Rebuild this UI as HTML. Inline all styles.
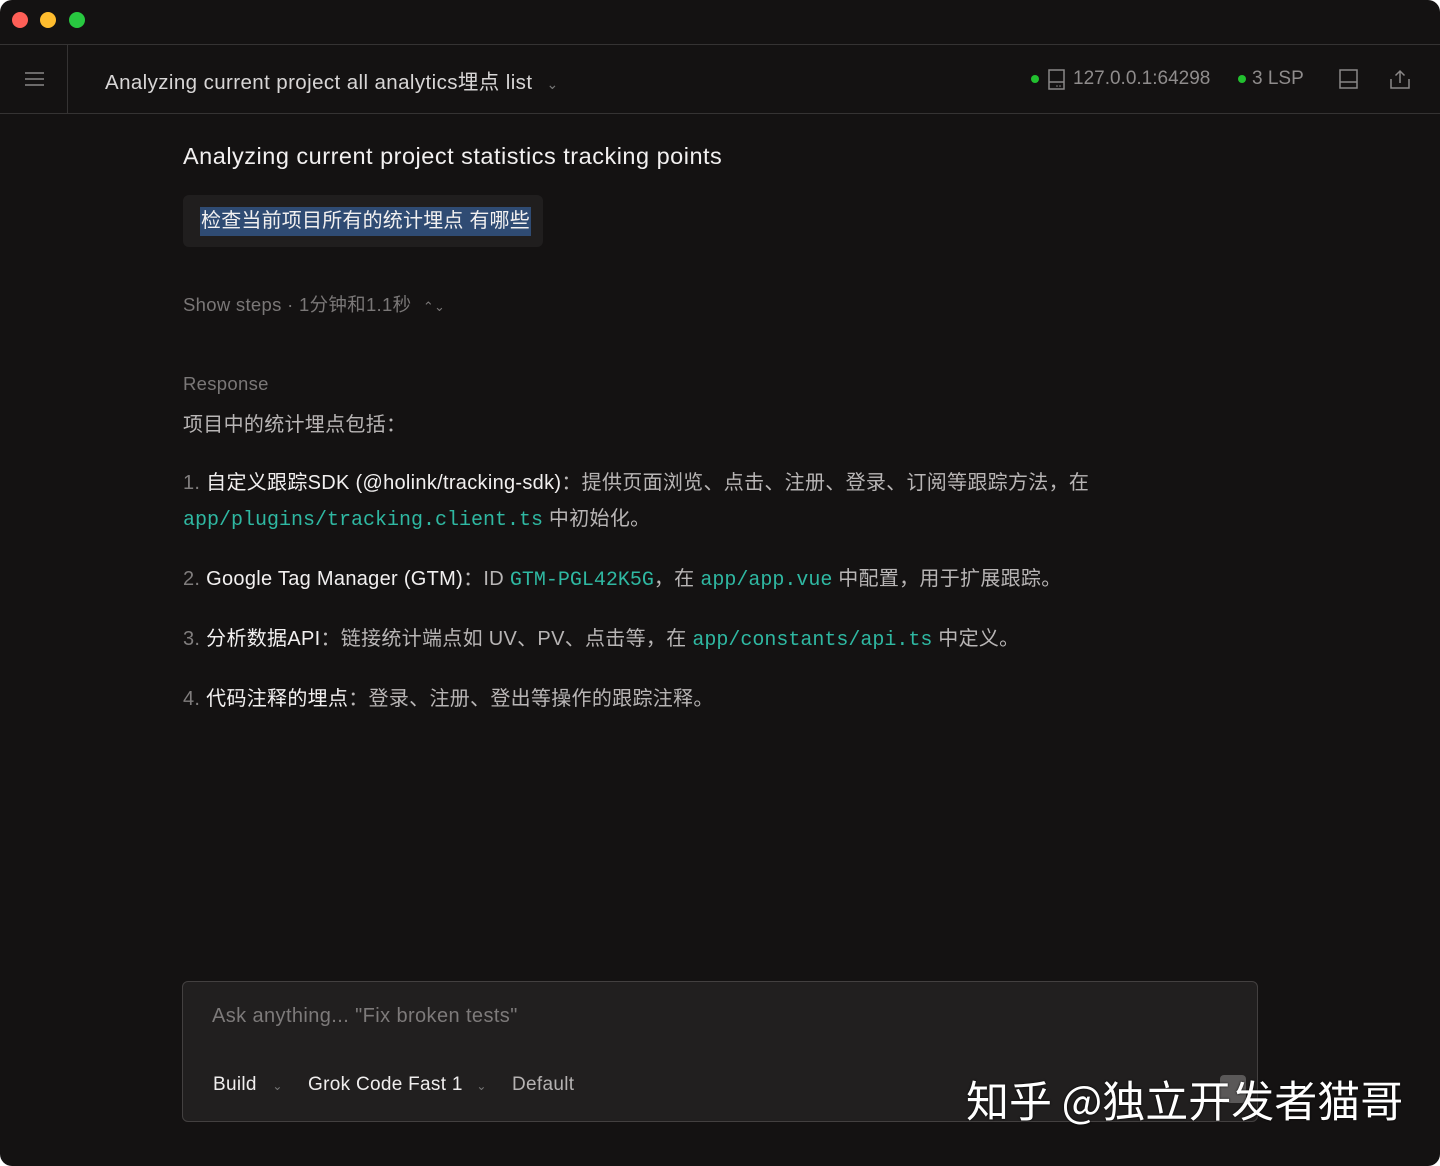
<!DOCTYPE html>
<html><head><meta charset="utf-8"><style>
*{margin:0;padding:0;box-sizing:border-box}
html,body{width:1440px;height:1166px;background:#fff;overflow:hidden}
.win{position:absolute;left:0;top:0;width:1440px;height:1166px;background:#141212;border-radius:12px;overflow:hidden;font-family:"Liberation Sans","Noto Sans CJK SC",sans-serif;color:#e6e4e4}
.tb{height:45px;border-bottom:1px solid #353333;position:relative}
.dot{position:absolute;top:12px;width:16px;height:16px;border-radius:50%}
.hd{height:69px;border-bottom:1px solid #353333;position:relative}
.abs{position:absolute;white-space:nowrap}
.mono{font-family:"Liberation Mono","Noto Sans CJK SC",monospace;color:#2fb8a2;font-size:20px;letter-spacing:0}
.p{position:absolute;left:183px;white-space:nowrap;font-size:20px;color:#b8b5b5;letter-spacing:0.3px}
.p b{color:#f2f0f0;font-weight:normal}
.n{color:#807d7d}
</style></head><body><div class="win">
<div class="tb">
<div class="dot" style="left:12px;background:#fe5f57"></div>
<div class="dot" style="left:40px;background:#febc2e"></div>
<div class="dot" style="left:69px;background:#28c840"></div>
</div>
<div class="hd">
<div class="abs" style="left:67px;top:0;width:1px;height:68px;background:#353333"></div>
<svg class="abs" style="left:25px;top:27px" width="19" height="14"><g stroke="#8a8787" stroke-width="1.5"><line x1="0" y1="1" x2="19" y2="1"/><line x1="0" y1="7" x2="19" y2="7"/><line x1="0" y1="13" x2="19" y2="13"/></g></svg>
<div class="abs" style="left:105px;top:20px;font-size:20.5px;letter-spacing:0.4px;color:#d8d6d6">Analyzing current project all analytics埋点 list <span style="color:#777;font-size:14px;margin-left:8px">⌄</span></div>
<div class="abs" style="left:1031px;top:30px;width:8px;height:8px;border-radius:50%;background:#22c02f"></div>
<svg class="abs" style="left:1048px;top:24px" width="18" height="22"><rect x="1" y="1" width="15" height="19" fill="none" stroke="#8a8787" stroke-width="1.5"/><line x1="1" y1="13" x2="16" y2="13" stroke="#8a8787" stroke-width="1.5"/><circle cx="9" cy="17" r="0.8" fill="#8a8787"/><circle cx="12" cy="17" r="0.8" fill="#8a8787"/></svg>
<div class="abs" style="left:1073px;top:23px;font-size:19px;color:#8f8c8c">127.0.0.1:64298</div>
<div class="abs" style="left:1238px;top:30px;width:8px;height:8px;border-radius:50%;background:#22c02f"></div>
<div class="abs" style="left:1252px;top:23px;font-size:19px;color:#8f8c8c">3 LSP</div>
<svg class="abs" style="left:1339px;top:24px" width="19" height="20"><rect x="1" y="1" width="17" height="18" fill="none" stroke="#8a8787" stroke-width="1.5"/><line x1="1" y1="13" x2="18" y2="13" stroke="#8a8787" stroke-width="1.5"/></svg>
<svg class="abs" style="left:1390px;top:24px" width="20" height="20"><g fill="none" stroke="#8a8787" stroke-width="1.5"><path d="M1 10v9h18v-9"/><path d="M10 14V2M5.5 6.5L10 2l4.5 4.5"/></g></svg>
</div>
<div class="abs" style="left:183px;top:143px;font-size:23.5px;letter-spacing:0.5px;color:#f2f0f0">Analyzing current project statistics tracking points</div>
<div class="abs" style="left:183px;top:195px;width:360px;height:52px;background:#201e1e;border-radius:6px"></div>
<div class="abs" style="left:200px;top:207px;height:29px;padding:1px 1px;background:#2f4b73;font-size:20px;letter-spacing:0.2px;color:#f2f0f0;line-height:27px">检查当前项目所有的统计埋点 有哪些</div>
<div class="p" style="top:291px;font-size:18.5px;color:#7a7777">Show steps · 1分钟和1.1秒 <span style="font-size:13px;margin-left:6px">⌃⌄</span></div>
<div class="p" style="top:373px;font-size:18.5px;color:#7a7777">Response</div>
<div class="p" style="top:408px">项目中的统计埋点包括：</div>
<div class="p" style="top:466px"><span class="n">1.</span> <b>自定义跟踪SDK (@holink/tracking-sdk)</b>：提供页面浏览、点击、注册、登录、订阅等跟踪方法，在</div>
<div class="p" style="top:502px"><span class="mono">app/plugins/tracking.client.ts</span> 中初始化。</div>
<div class="p" style="top:562px"><span class="n">2.</span> <b>Google Tag Manager (GTM)</b>：ID <span class="mono">GTM-PGL42K5G</span>，在 <span class="mono">app/app.vue</span> 中配置，用于扩展跟踪。</div>
<div class="p" style="top:622px"><span class="n">3.</span> <b>分析数据API</b>：链接统计端点如 UV、PV、点击等，在 <span class="mono">app/constants/api.ts</span> 中定义。</div>
<div class="p" style="top:682px"><span class="n">4.</span> <b>代码注释的埋点</b>：登录、注册、登出等操作的跟踪注释。</div>
<div class="abs" style="left:182px;top:981px;width:1076px;height:141px;background:#211f1f;border:1.5px solid #434040;border-radius:6px"></div>
<div class="abs" style="left:212px;top:1005px;font-size:20px;letter-spacing:0.4px;color:#7d7a7a">Ask anything... "Fix broken tests"</div>
<div class="abs" style="left:213px;top:1074px;font-size:19px;letter-spacing:0.3px;color:#f0eeee">Build <span style="color:#777;font-size:12px;margin-left:10px">⌄</span></div>
<div class="abs" style="left:308px;top:1074px;font-size:19px;letter-spacing:0.3px;color:#f0eeee">Grok Code Fast 1 <span style="color:#777;font-size:12px;margin-left:8px">⌄</span></div>
<div class="abs" style="left:512px;top:1074px;font-size:19px;letter-spacing:0.3px;color:#b5b2b2">Default</div>
<div class="abs" style="left:1220px;top:1075px;width:26px;height:28px;background:#5a5858;border-radius:4px"></div>
<div class="abs" style="left:966px;top:1078px;font-size:43px;color:#fff;font-family:'Noto Sans CJK SC',sans-serif;line-height:1;text-shadow:0 0 2px #000">知乎 @独立开发者猫哥</div>
</div></body></html>
